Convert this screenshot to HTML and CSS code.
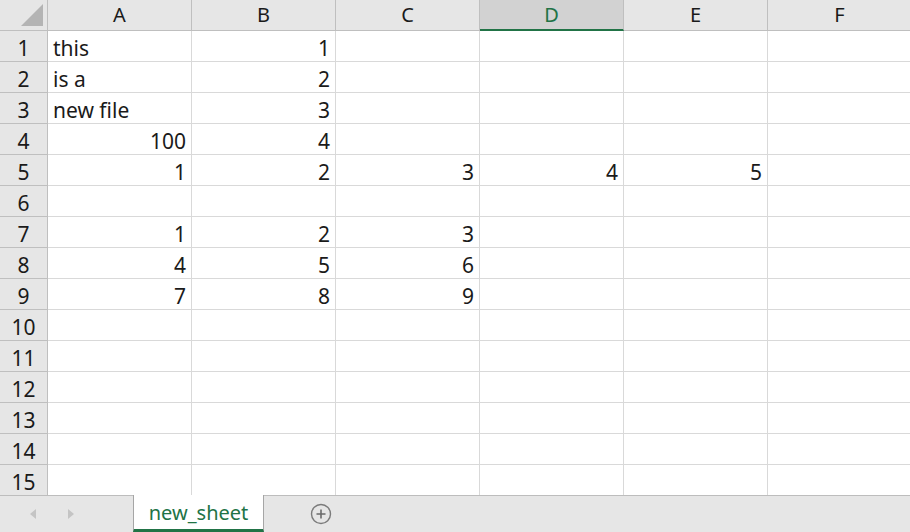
FILE: index.html
```html
<!DOCTYPE html>
<html lang="en">
<head>
  <meta charset="UTF-8" />
  <title>new_sheet</title>
  <link rel="stylesheet" href="styles.css">
</head>
<body>
  <div class="sheet">
    <div class="row head">
      <div class="corner"><span class="tri"></span></div>
      <div class="col-head">A</div>
      <div class="col-head">B</div>
      <div class="col-head">C</div>
      <div class="col-head active">D</div>
      <div class="col-head">E</div>
      <div class="col-head">F</div>
    </div>
    <div class="row"><div class="num">1</div><div class="cell">this</div><div class="cell n">1</div><div class="cell"></div><div class="cell"></div><div class="cell"></div><div class="cell"></div></div>
    <div class="row"><div class="num">2</div><div class="cell">is a</div><div class="cell n">2</div><div class="cell"></div><div class="cell"></div><div class="cell"></div><div class="cell"></div></div>
    <div class="row"><div class="num">3</div><div class="cell">new file</div><div class="cell n">3</div><div class="cell"></div><div class="cell"></div><div class="cell"></div><div class="cell"></div></div>
    <div class="row"><div class="num">4</div><div class="cell n">100</div><div class="cell n">4</div><div class="cell"></div><div class="cell"></div><div class="cell"></div><div class="cell"></div></div>
    <div class="row"><div class="num">5</div><div class="cell n">1</div><div class="cell n">2</div><div class="cell n">3</div><div class="cell n">4</div><div class="cell n">5</div><div class="cell"></div></div>
    <div class="row"><div class="num">6</div><div class="cell"></div><div class="cell"></div><div class="cell"></div><div class="cell"></div><div class="cell"></div><div class="cell"></div></div>
    <div class="row"><div class="num">7</div><div class="cell n">1</div><div class="cell n">2</div><div class="cell n">3</div><div class="cell"></div><div class="cell"></div><div class="cell"></div></div>
    <div class="row"><div class="num">8</div><div class="cell n">4</div><div class="cell n">5</div><div class="cell n">6</div><div class="cell"></div><div class="cell"></div><div class="cell"></div></div>
    <div class="row"><div class="num">9</div><div class="cell n">7</div><div class="cell n">8</div><div class="cell n">9</div><div class="cell"></div><div class="cell"></div><div class="cell"></div></div>
    <div class="row"><div class="num">10</div><div class="cell"></div><div class="cell"></div><div class="cell"></div><div class="cell"></div><div class="cell"></div><div class="cell"></div></div>
    <div class="row"><div class="num">11</div><div class="cell"></div><div class="cell"></div><div class="cell"></div><div class="cell"></div><div class="cell"></div><div class="cell"></div></div>
    <div class="row"><div class="num">12</div><div class="cell"></div><div class="cell"></div><div class="cell"></div><div class="cell"></div><div class="cell"></div><div class="cell"></div></div>
    <div class="row"><div class="num">13</div><div class="cell"></div><div class="cell"></div><div class="cell"></div><div class="cell"></div><div class="cell"></div><div class="cell"></div></div>
    <div class="row"><div class="num">14</div><div class="cell"></div><div class="cell"></div><div class="cell"></div><div class="cell"></div><div class="cell"></div><div class="cell"></div></div>
    <div class="row"><div class="num">15</div><div class="cell"></div><div class="cell"></div><div class="cell"></div><div class="cell"></div><div class="cell"></div><div class="cell"></div></div>
  </div>

  <div class="tabbar">
    <div class="nav">
      <span class="arrow left"></span>
      <span class="arrow right"></span>
    </div>
    <div class="tab">new_sheet</div>
    <div class="add">
      <svg width="22" height="22" viewBox="0 0 22 22">
        <circle cx="11" cy="11" r="9.5" fill="none" stroke="#7b7b7b" stroke-width="1.4" />
        <path d="M11 6.5v9M6.5 11h9" stroke="#6b6b6b" stroke-width="1.6" />
      </svg>
    </div>
  </div>
</body>
</html>
```

FILE: styles.css
```css
body {
  margin: 0;
  width: 910px;
  height: 532px;
  overflow: hidden;
  background: #fff;
  color: #1a1a1a;
  font-family: "Noto Sans", "Noto Sans CJK SC", sans-serif;
  font-size: 20px;
}
.sheet {
  height: 495px;
  overflow: hidden;
}
.row {
  display: flex;
  height: 31px;
}
.row > div {
  flex: none;
  box-sizing: border-box;
  height: 31px;
  overflow: hidden;
  border-right: 1px solid #d9d9d9;
  border-bottom: 1px solid #d9d9d9;
  font-size: 21px;
  line-height: 35px;
  white-space: nowrap;
}
.head > div {
  font-size: 20px;
  line-height: 30px;
}
.corner, .num {
  width: 48px;
  background: #e6e6e6;
}
.row > .num, .head > div {
  border-right-color: #bfbfbf;
  border-bottom-color: #bfbfbf;
}
.corner {
  position: relative;
}
.tri {
  position: absolute;
  right: 4px;
  bottom: 4px;
  width: 0;
  height: 0;
  border-left: 22px solid transparent;
  border-bottom: 22px solid #b4b4b4;
}
.num {
  text-align: center;
}
.col-head {
  width: 144px;
  background: #e6e6e6;
  text-align: center;
}
.col-head.active {
  background: #d2d2d2;
  color: #217346;
}
.head > .col-head.active {
  border-bottom: 2px solid #217346;
}
.cell {
  width: 144px;
  padding: 0 5px;
}
.cell.n {
  text-align: right;
}
.tabbar {
  display: flex;
  height: 37px;
  box-sizing: border-box;
  border-top: 1px solid #bdbdbd;
  background: #e6e6e6;
}
.nav {
  width: 133px;
  display: flex;
  align-items: center;
  gap: 32px;
  padding-left: 30px;
  box-sizing: border-box;
}
.arrow {
  width: 0;
  height: 0;
  border-top: 5px solid transparent;
  border-bottom: 5px solid transparent;
}
.arrow.left {
  border-right: 6px solid #c4c4c4;
}
.arrow.right {
  border-left: 6px solid #c4c4c4;
}
.tab {
  width: 131px;
  box-sizing: border-box;
  margin-top: -1px;
  background: #fff;
  border-left: 1px solid #a6a6a6;
  border-right: 1px solid #a6a6a6;
  border-bottom: 3px solid #217346;
  color: #217346;
  text-align: center;
  line-height: 36px;
}
.add {
  display: flex;
  align-items: center;
  padding-left: 46px;
}
.add svg {
  display: block;
}
```
